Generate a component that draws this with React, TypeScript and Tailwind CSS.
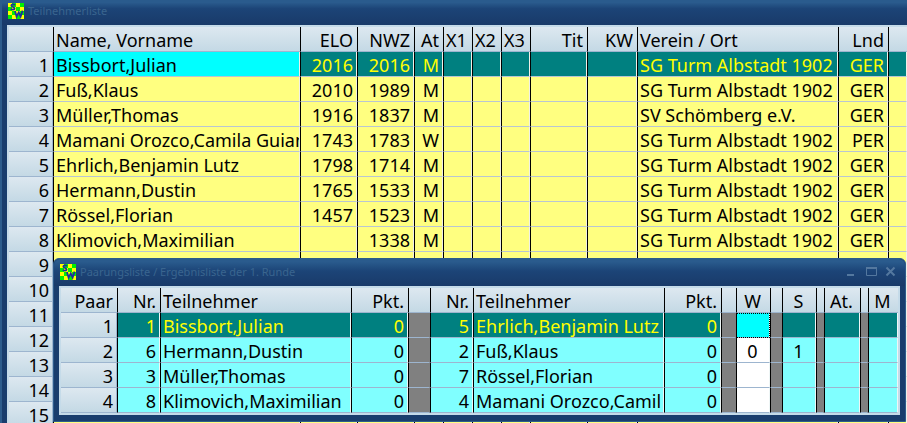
import clsx from "clsx";

type Align = "left" | "right" | "center";

interface Column {
  title: string;
  width: string;
  align: Align;
}

interface Player {
  name: string;
  elo: string;
  nwz: string;
  at: string;
  club: string;
  country: string;
}

const SG = "SG Turm Albstadt 1902";

const players: Player[] = [
  { name: "Bissbort,Julian", elo: "2016", nwz: "2016", at: "M", club: SG, country: "GER" },
  { name: "Fuß,Klaus", elo: "2010", nwz: "1989", at: "M", club: SG, country: "GER" },
  { name: "Müller,Thomas", elo: "1916", nwz: "1837", at: "M", club: "SV Schömberg e.V.", country: "GER" },
  { name: "Mamani Orozco,Camila Guian", elo: "1743", nwz: "1783", at: "W", club: SG, country: "PER" },
  { name: "Ehrlich,Benjamin Lutz", elo: "1798", nwz: "1714", at: "M", club: SG, country: "GER" },
  { name: "Hermann,Dustin", elo: "1765", nwz: "1533", at: "M", club: SG, country: "GER" },
  { name: "Rössel,Florian", elo: "1457", nwz: "1523", at: "M", club: SG, country: "GER" },
  { name: "Klimovich,Maximilian", elo: "", nwz: "1338", at: "M", club: SG, country: "GER" },
];

const playerColumns: Column[] = [
  { title: "Name, Vorname", width: "w-[247px]", align: "left" },
  { title: "ELO", width: "w-[57px]", align: "right" },
  { title: "NWZ", width: "w-[57px]", align: "right" },
  { title: "At", width: "w-[29px]", align: "right" },
  { title: "X1", width: "w-[29px]", align: "left" },
  { title: "X2", width: "w-[29px]", align: "left" },
  { title: "X3", width: "w-[29px]", align: "left" },
  { title: "Tit", width: "w-[57px]", align: "right" },
  { title: "KW", width: "w-[50px]", align: "right" },
  { title: "Verein / Ort", width: "w-[201px]", align: "left" },
  { title: "Lnd", width: "w-[50px]", align: "right" },
  { title: "", width: "w-auto", align: "left" },
];

const pairingColumns: (Column & { gap?: boolean })[] = [
  { title: "Nr.", width: "w-[43px]", align: "right" },
  { title: "Teilnehmer", width: "w-[191px]", align: "left" },
  { title: "Pkt.", width: "w-[57px]", align: "right" },
  { title: "", width: "w-[22px]", align: "left", gap: true },
  { title: "Nr.", width: "w-[43px]", align: "right" },
  { title: "Teilnehmer", width: "w-[191px]", align: "left" },
  { title: "Pkt.", width: "w-[57px]", align: "right" },
  { title: "", width: "w-[15px]", align: "left", gap: true },
  { title: "W", width: "w-[34px]", align: "center" },
  { title: "", width: "w-[12px]", align: "left", gap: true },
  { title: "S", width: "w-[34px]", align: "center" },
  { title: "", width: "w-[8px]", align: "left", gap: true },
  { title: "At.", width: "w-[36px]", align: "center" },
  { title: "", width: "w-[8px]", align: "left", gap: true },
  { title: "M", width: "w-auto", align: "center" },
];

const pairings: string[][] = [
  ["1", "Bissbort,Julian", "0", "", "5", "Ehrlich,Benjamin Lutz", "0", "", "", "", "", "", "", "", ""],
  ["6", "Hermann,Dustin", "0", "", "2", "Fuß,Klaus", "0", "", "0", "", "1", "", "", "", ""],
  ["3", "Müller,Thomas", "0", "", "7", "Rössel,Florian", "0", "", "", "", "", "", "", "", ""],
  ["8", "Klimovich,Maximilian", "0", "", "4", "Mamani Orozco,Camil", "0", "", "", "", "", "", "", "", ""],
];

const RESULT_WHITE = 8;

const headAlign: Record<Align, string> = {
  left: "text-left pl-[2px]",
  right: "text-right pr-1",
  center: "text-center pr-[2px]",
};

// body cells carry a 1px light edge on the right, so the padding there is 1px less
const bodyAlign: Record<Align, string> = {
  left: "text-left pl-[2px]",
  right: "text-right pr-[3px]",
  center: "text-center pr-px",
};

const cell = "h-[25px] pt-[2px] overflow-hidden whitespace-nowrap font-normal leading-[22px] border-b";
const header = "bg-linear-to-b from-[#dde8f0] to-[#c4d9e5] border-b-[#9db5cf]";
const rowHeader = "border-r border-r-[#9db5cf] text-right pr-[3px]";
const divider = "border-l border-l-black";

function SwissLogo() {
  const squares = [];
  for (let y = 0; y < 4; y++) {
    for (let x = 0; x < 4; x++) {
      squares.push(
        <rect key={`${x}-${y}`} x={x * 4} y={y * 4} width="4" height="4" fill={(x + y) % 2 ? "#00f000" : "#ffff00"} />
      );
    }
  }
  return (
    <svg width="16" height="16" viewBox="0 0 16 16" className="shrink-0" aria-hidden="true">
      {squares}
      <path d="M7 2.2C5.8 .8 3.2 1.2 3.3 2.8C3.4 4.2 6.7 3.8 6.6 5.4C6.5 7 3.8 7 2.8 5.8" fill="none" stroke="#1f2f9c" strokeWidth="1.7" />
      <path d="M7 8L8.6 13.6L10.8 9.4L12.6 13.6L14.6 7.6" fill="none" stroke="#1f2f9c" strokeWidth="1.8" />
    </svg>
  );
}

function PlayerTable() {
  return (
    <table className="w-full table-fixed border-separate border-spacing-0">
      <thead>
        <tr>
          <th className={clsx(cell, header, "w-[44px]")} />
          {playerColumns.map((col, i) => (
            <th key={i} className={clsx(cell, header, divider, col.width, headAlign[col.align])}>
              {col.title}
            </th>
          ))}
        </tr>
      </thead>
      <tbody>
        {Array.from({ length: 15 }, (_, row) => {
          const p = players[row];
          const values = p
            ? [p.name, p.elo, p.nwz, p.at, "", "", "", "", "", p.club, p.country, ""]
            : playerColumns.map(() => "");
          return (
            <tr key={row}>
              <th className={clsx(cell, header, rowHeader)}>{row + 1}</th>
              {values.map((value, i) => (
                <td
                  key={i}
                  className={clsx(
                    cell,
                    divider,
                    "border-r border-r-[#f0f0e8] border-b-[#b9c6d2]",
                    bodyAlign[playerColumns[i].align],
                    row === 0 && i === 0 && "bg-[#00ffff]",
                    row === 0 && i > 0 && "bg-[#008080] text-[#ffff00]",
                    row > 0 && "bg-[#ffff80]"
                  )}
                >
                  {value}
                </td>
              ))}
            </tr>
          );
        })}
      </tbody>
    </table>
  );
}

function PairingTable() {
  return (
    <table className="w-full table-fixed border-separate border-spacing-0">
      <thead>
        <tr>
          <th className={clsx(cell, header, "w-[56px] text-right pr-1")}>Paar</th>
          {pairingColumns.map((col, i) => (
            <th key={i} className={clsx(cell, header, divider, col.width, headAlign[col.align])}>
              {col.title}
            </th>
          ))}
        </tr>
      </thead>
      <tbody>
        {pairings.map((values, row) => (
          <tr key={row}>
            <th className={clsx(cell, header, rowHeader)}>{row + 1}</th>
            {values.map((value, i) => {
              const result = i === RESULT_WHITE;
              const gap = pairingColumns[i].gap;
              return (
                <td
                  key={i}
                  className={clsx(
                    cell,
                    divider,
                    "border-r border-b-[#9db5cf]",
                    gap ? "border-r-[#808080]" : "border-r-[#eef6f6]",
                    bodyAlign[pairingColumns[i].align],
                    gap && "bg-[#808080]",
                    result && row === 0 && "bg-[#00ffff] outline-1 outline-dotted -outline-offset-1 outline-black",
                    result && row > 0 && "bg-white",
                    !gap && !result && row === 0 && "bg-[#008080] text-[#ffff00]",
                    !gap && !result && row > 0 && "bg-[#80ffff]"
                  )}
                >
                  {value}
                </td>
              );
            })}
          </tr>
        ))}
      </tbody>
    </table>
  );
}

function WindowButtons() {
  return (
    <div className="ml-auto flex gap-1 text-[#54789f]">
      <button type="button" aria-label="Minimieren" className="flex size-4 items-center justify-center">
        <svg width="16" height="16" viewBox="0 0 16 16" fill="none" stroke="currentColor" strokeWidth="2">
          <path d="M3 11H10" />
        </svg>
      </button>
      <button type="button" aria-label="Maximieren" className="flex size-4 items-center justify-center">
        <svg width="16" height="16" viewBox="0 0 16 16" fill="none" stroke="currentColor">
          <path d="M2.5 3.5H12.5V11.5H2.5Z" />
          <path d="M2 4H13" strokeWidth="2" />
        </svg>
      </button>
      <button type="button" aria-label="Schließen" className="flex size-4 items-center justify-center">
        <svg width="16" height="16" viewBox="0 0 16 16" fill="none" stroke="currentColor" strokeWidth="2">
          <path d="M2.5 3.5L10.5 11.5M10.5 3.5L2.5 11.5" />
        </svg>
      </button>
    </div>
  );
}

export default function App() {
  return (
    <main className="relative h-screen overflow-hidden border-l-2 border-[#2d5c8c] bg-[#193d6d] pl-[5px] font-['Noto_Sans',sans-serif] text-lg text-black">
      <header className="-ml-[5px] flex h-[25px] items-center gap-1 bg-linear-to-b from-[#2a5b8d] from-10% via-[#1c4477] via-35% to-[#193a69] pb-[3px] pl-[6px] text-[11px] text-[#3a658f]">
        <SwissLogo />
        <h1>Teilnehmerliste</h1>
      </header>
      <div className="border-t-2 border-l-2 border-[#c5dbe9]">
        <PlayerTable />
      </div>

      <section className="absolute top-[258px] right-px left-[51px] rounded-t-md border border-[#2d5c8c] bg-[#193d6d] px-[5px] pb-[6px]">
        <header className="-mx-[5px] flex h-[27px] items-center gap-1 rounded-t-md bg-linear-to-b from-[#2a5b8d] from-10% via-[#1c4477] via-45% to-[#193a69] pr-[5px] pb-[2px] pl-[6px] text-[11px] text-[#3a658f]">
          <SwissLogo />
          <h2>Paarungsliste / Ergebnisliste der 1. Runde</h2>
          <WindowButtons />
        </header>
        <div className="border-2 border-[#c5dbe9]">
          <PairingTable />
        </div>
      </section>
    </main>
  );
}
